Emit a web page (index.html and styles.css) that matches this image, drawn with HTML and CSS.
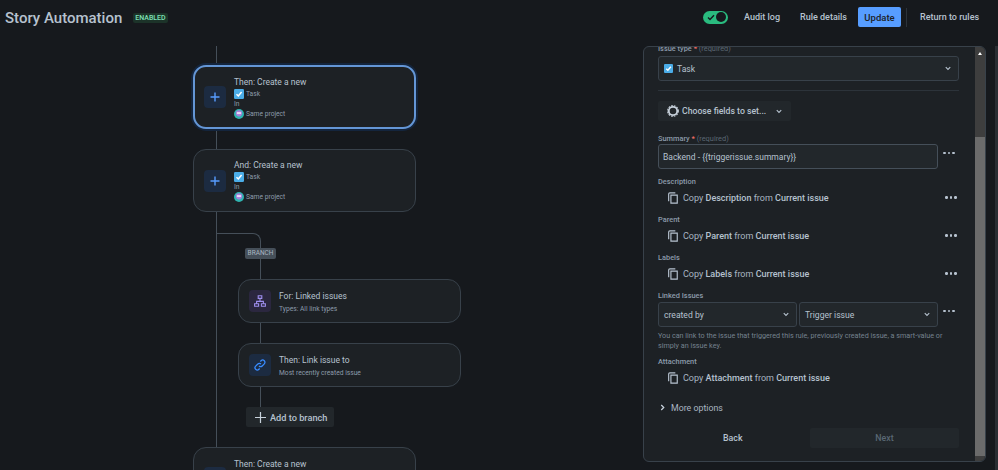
FILE: index.html
```html
<!DOCTYPE html>
<html lang="en">
<head>
<meta charset="utf-8">
<title>Story Automation</title>
<link rel="stylesheet" href="styles.css">
</head>
<body>
<svg class="defs" width="0" height="0">
  <defs>
    <symbol id="copy" viewBox="0 0 12 14"><path d="M3.500 3.500h7.600v9.700H3.500zM.8 11V2.200C.8 1.300 1.400.8 2.200.8h6.600" fill="none" stroke="currentColor" stroke-width="1.400"/></symbol>
    <symbol id="chev" viewBox="0 0 8 6"><path d="M1 1.300l3 3 3-3" fill="none" stroke="currentColor" stroke-width="1.500"/></symbol>
    <symbol id="task" viewBox="0 0 10 10"><rect width="10" height="10" rx="1.200" fill="#4bade8"/><path d="M2.500 5.200l1.800 1.800 3.300-4" fill="none" stroke="#fff" stroke-width="1.500"/></symbol>
    <symbol id="proj" viewBox="0 0 11 11"><circle cx="5.500" cy="5.500" r="5.500" fill="#2fb4b0"/><circle cx="5.500" cy="4.800" r="3.400" fill="#a77fdc"/><path d="M3.200 3.400h4.600v2.200H3.200z" fill="#e6dcf5"/></symbol>
  </defs>
</svg>
<header class="topbar">
  <div class="title-group">
    <h1 class="title">Story Automation</h1>
    <span class="lozenge">ENABLED</span>
  </div>
  <nav class="actions">
    <span class="toggle"><svg class="toggle-check" viewBox="0 0 8 7" width="8" height="7"><path d="M1 3.500l2 2 4-4.300" fill="none" stroke="#16191d" stroke-width="1.400"/></svg><span class="toggle-knob"></span></span>
    <span class="action action-audit">Audit log</span>
    <span class="action action-details">Rule details</span>
    <span class="update">Update</span>
    <span class="divider"></span>
    <span class="action action-return">Return to rules</span>
  </nav>
</header>
<main class="workspace">
  <section class="canvas">
    <div class="line line-main"></div>
    <div class="branch-curve"></div>
    <div class="line line-branch"></div>
    <span class="branch-tag">BRANCH</span>

    <article class="card card-a selected">
      <span class="tile tile-blue"><svg viewBox="0 0 10 10" width="10" height="10"><path d="M5 .5v9M.5 5h9" stroke="#579dff" stroke-width="1.400"/></svg></span>
      <div class="card-body">
        <p class="card-title">Then: Create a new</p>
        <p class="meta"><svg class="meta-ic" width="10" height="10"><use href="#task"/></svg>Task</p>
        <p class="meta-in">In</p>
        <p class="meta"><svg class="meta-ic" width="10" height="10"><use href="#proj"/></svg>Same project</p>
      </div>
    </article>

    <article class="card card-b">
      <span class="tile tile-blue"><svg viewBox="0 0 10 10" width="10" height="10"><path d="M5 .5v9M.5 5h9" stroke="#579dff" stroke-width="1.400"/></svg></span>
      <div class="card-body">
        <p class="card-title">And: Create a new</p>
        <p class="meta"><svg class="meta-ic" width="10" height="10"><use href="#task"/></svg>Task</p>
        <p class="meta-in">In</p>
        <p class="meta"><svg class="meta-ic" width="10" height="10"><use href="#proj"/></svg>Same project</p>
      </div>
    </article>

    <article class="card card-c">
      <span class="tile tile-purple"><svg viewBox="0 0 12 12" width="12" height="12"><path d="M4.200.8h3.600v2.600H4.200zM.6 8.800h4v2.400h-4zM7.400 8.800h4v2.400h-4zM6 3.400v3M2.600 8.800V6.400h6.800v2.400" fill="none" stroke="#9f8fef" stroke-width="1.100"/></svg></span>
      <div class="card-body short">
        <p class="card-title">For: Linked issues</p>
        <p class="meta-sub">Types: All link types</p>
      </div>
    </article>

    <article class="card card-d">
      <span class="tile tile-blue"><svg viewBox="0 0 12 12" width="12" height="12"><path d="M5 7a2.200 2.200 0 0 0 3.200 0l2.100-2.100a2.250 2.250 0 0 0-3.200-3.200l-.8.8M7 5a2.200 2.200 0 0 0-3.200 0L1.700 7.100a2.250 2.250 0 0 0 3.200 3.200l.8-.8" fill="none" stroke="#388bff" stroke-width="1.300"/></svg></span>
      <div class="card-body short">
        <p class="card-title">Then: Link issue to</p>
        <p class="meta-sub">Most recently created issue</p>
      </div>
    </article>

    <span class="add-branch"><svg viewBox="0 0 11 11" width="11" height="11"><path d="M5.500 0v11M0 5.500h11" stroke="#c7d1db" stroke-width="1.200"/></svg>Add to branch</span>

    <article class="card card-e">
      <span class="tile tile-blue"><svg viewBox="0 0 10 10" width="10" height="10"><path d="M5 .5v9M.5 5h9" stroke="#579dff" stroke-width="1.400"/></svg></span>
      <div class="card-body">
        <p class="card-title">Then: Create a new</p>
      </div>
    </article>
  </section>

  <aside class="panel">
    <div class="panel-scroll">
      <label class="field-label clipped">Issue type <b>*</b> <i>(required)</i></label>
      <div class="select select-type"><svg class="select-ic" width="9" height="9"><use href="#task"/></svg><span>Task</span><svg class="chev" width="8" height="6"><use href="#chev"/></svg></div>
      <hr class="rule">
      <div class="choose"><svg viewBox="0 0 12 12" width="12" height="12"><circle cx="6" cy="6" r="4.200" fill="none" stroke="#c7d1db" stroke-width="1.800"/><circle cx="6" cy="6" r="5.300" fill="none" stroke="#c7d1db" stroke-width="1.200" stroke-dasharray="1.700 1.100"/></svg><span>Choose fields to set...</span><svg class="chev" width="8" height="6"><use href="#chev"/></svg></div>

      <label class="field-label">Summary <b>*</b> <i>(required)</i></label>
      <div class="row">
        <div class="input">Backend - {{triggerissue.summary}}</div>
        <span class="dots raised"><i></i><i></i><i></i></span>
      </div>

      <label class="field-label spaced">Description</label>
      <div class="row copy-row">
        <svg class="copy-ic" width="10" height="12"><use href="#copy"/></svg>
        <span class="copy-text">Copy <strong>Description</strong> from <strong>Current issue</strong></span>
        <span class="dots"><i></i><i></i><i></i></span>
      </div>
      <label class="field-label spaced">Parent</label>
      <div class="row copy-row">
        <svg class="copy-ic" width="10" height="12"><use href="#copy"/></svg>
        <span class="copy-text">Copy <strong>Parent</strong> from <strong>Current issue</strong></span>
        <span class="dots"><i></i><i></i><i></i></span>
      </div>
      <label class="field-label spaced">Labels</label>
      <div class="row copy-row">
        <svg class="copy-ic" width="10" height="12"><use href="#copy"/></svg>
        <span class="copy-text">Copy <strong>Labels</strong> from <strong>Current issue</strong></span>
        <span class="dots"><i></i><i></i><i></i></span>
      </div>

      <label class="field-label spaced">Linked Issues</label>
      <div class="row linked">
        <div class="select half"><span>created by</span><svg class="chev" width="8" height="6"><use href="#chev"/></svg></div>
        <div class="select half"><span>Trigger issue</span><svg class="chev" width="8" height="6"><use href="#chev"/></svg></div>
        <span class="dots raised"><i></i><i></i><i></i></span>
      </div>
      <p class="help">You can link to the issue that triggered this rule, previously created issue, a smart-value or simply an issue key.</p>

      <label class="field-label attach">Attachment</label>
      <div class="row copy-row">
        <svg class="copy-ic" width="10" height="12"><use href="#copy"/></svg>
        <span class="copy-text">Copy <strong>Attachment</strong> from <strong>Current issue</strong></span>
      </div>

      <div class="more"><svg viewBox="0 0 6 8" width="5" height="7"><path d="M1.500 1l3 3-3 3" fill="none" stroke="#c7d1db" stroke-width="1.500"/></svg><span>More options</span></div>

      <div class="footer">
        <span class="back">Back</span>
        <span class="next">Next</span>
      </div>
    </div>
    <div class="scrollbar"><span class="arrow up"></span><span class="thumb"></span><span class="arrow down"></span></div>
  </aside>
  <div class="page-scroll"></div>
</main>
</body>
</html>
```
FILE: styles.css
```css
* { box-sizing: border-box; }
html, body { margin: 0; height: 470px; overflow: hidden; }
body {
  background: #16191d;
  color: #b6c2cf;
  font-family: Roboto, "Noto Sans", "Liberation Sans", sans-serif;
  font-size: 8.600px;
}
p, h1 { margin: 0; }
.defs { position: absolute; }

.topbar { height: 46px; display: flex; justify-content: space-between; align-items: flex-start; padding: 0 0 0 5px; }
.title-group { display: flex; align-items: center; height: 36px; gap: 11px; }
.title { font-size: 15px; font-weight: 500; color: #b6c2cf; }
.lozenge { background: #1c3329; color: #7ee2b8; font-size: 7px; font-weight: 500; padding: 1px 2px; border-radius: 2px; line-height: 8px; }
.actions { display: flex; align-items: center; height: 20px; margin-top: 7px; color: #b6c2cf; }
.toggle { width: 25px; height: 13px; border-radius: 7px; background: #2abb7f; position: relative; margin-right: 16px; display: block; }
.toggle-check { position: absolute; left: 4px; top: 3px; }
.toggle-knob { position: absolute; right: 2px; top: 1.500px; width: 10px; height: 10px; border-radius: 50%; background: #16191d; }
.action { font-size: 9px; font-weight: 500; white-space: nowrap; }
.action-audit { width: 56px; }
.action-details { width: 58px; }
.update { width: 43px; height: 20px; background: #579dff; color: #1d2125; font-weight: 500; font-size: 9.500px; border-radius: 2px; display: flex; align-items: center; justify-content: center; }
.divider { width: 1px; height: 19px; background: #2c333a; margin: 0 13px 0 5px; }
.action-return { width: 60px; margin-right: 18px; }

.workspace { display: flex; height: 424px; position: relative; }
.canvas { width: 643px; height: 424px; position: relative; overflow: hidden; flex: none; }
.line { position: absolute; background: #454f59; width: 1px; }
.line-main { left: 216px; top: 0; height: 401px; }
.line-branch { left: 260px; top: 200px; height: 161px; }
.branch-curve { position: absolute; left: 216px; top: 187px; width: 45px; height: 20px; border-top: 1px solid #454f59; border-right: 1px solid #454f59; border-top-right-radius: 8px; }
.branch-tag { position: absolute; left: 245px; top: 202px; height: 11px; width: 31px; background: #454f59; color: #a9b5c1; font-size: 6.500px; line-height: 11px; text-align: center; border-radius: 2px; }

.card { position: absolute; width: 223px; background: #1d2125; border: 1px solid #38414a; border-radius: 13px; display: flex; align-items: center; padding-left: 10px; gap: 8px; }
.card-a { left: 193px; top: 19px; height: 64px; }
.card-b { left: 193px; top: 103px; height: 63px; }
.card-c { left: 238px; top: 233px; height: 44px; }
.card-d { left: 238px; top: 297px; height: 44px; }
.card-e { left: 193px; top: 401px; height: 64px; align-items: flex-start; padding-top: 10px; }
.card-e .tile { margin-top: 9px; }
.selected { border: 2px solid #6496d6; box-shadow: 0 0 0 2px #14253d; padding-left: 9px; }
.tile { width: 22px; height: 22px; border-radius: 4px; display: flex; align-items: center; justify-content: center; flex: none; }
.tile-blue { background: #1c2b41; }
.tile-purple { background: #2b273f; }
.short { padding-top: 2px; }
.card-title { font-size: 8.500px; line-height: 12px; margin-bottom: 1px; color: #b6c2cf; }
.meta { display: flex; align-items: center; gap: 2px; font-size: 6.700px; line-height: 10px; color: #8c9bab; }
.meta-ic { flex: none; }
.meta-in { font-size: 6.700px; line-height: 10px; color: #8c9bab; }
.meta-sub { font-size: 6.700px; line-height: 12px; color: #8c9bab; }

.add-branch { position: absolute; left: 246px; top: 361px; width: 88px; height: 20px; background: #22272b; border-radius: 2px; color: #b6c2cf; font-size: 9.200px; font-weight: 500; display: flex; align-items: center; gap: 4px; padding-left: 9px; }

.panel { width: 343px; height: 416px; flex: none; background: #1d2125; border: 1px solid #38414a; border-radius: 6px; display: flex; overflow: hidden; position: relative; }
.panel-scroll { flex: 1; padding: 0 14px; min-width: 0; }
.scrollbar { width: 10px; background: #3e3e3e; flex: none; position: relative; display: flex; flex-direction: column; justify-content: space-between; }
.thumb { position: absolute; left: 0; right: 0; top: 90px; height: 319px; background: #6b6b6b; }
.arrow { display: block; width: 0; height: 0; border-left: 2.500px solid transparent; border-right: 2.500px solid transparent; margin: 5px auto; }
.arrow.up { border-bottom: 3px solid #fff; }
.arrow.down { border-top: 3px solid #6b6b6b; position: relative; }
.page-scroll { width: 3px; margin-left: 9px; height: 424px; background: #2a2e33; }

.field-label { display: block; font-size: 7.400px; font-weight: 500; color: #8c9bab; line-height: 11px; }
.field-label b { color: #f87168; font-weight: 500; }
.field-label i { font-style: normal; font-weight: 400; color: #5b6773; }
.clipped { height: 8px; line-height: 4px; overflow: hidden; }
.spaced { margin-top: 7px; }
.attach { margin-top: 5px; }

.select { height: 25px; background: #22272b; border: 1px solid #38414a; border-radius: 3px; display: flex; align-items: center; padding-left: 5px; font-size: 8.600px; color: #b6c2cf; }
.select-type { width: 301px; margin-top: 1px; gap: 4px; }
.select-type span { flex: 1; }
.select .chev { margin-right: 7px; flex: none; color: #b6c2cf; }
.chev { width: 6px; height: 5px; }
.half { width: 139px; flex: none; justify-content: space-between; }
.rule { border: 0; border-top: 1px solid #2c333a; margin: 9px 0 10px; width: 301px; }
.choose { width: 133px; height: 20px; background: #22272b; border-radius: 2px; display: flex; align-items: center; font-size: 8.700px; font-weight: 500; padding-left: 9px; gap: 3px; color: #b6c2cf; white-space: nowrap; }
.choose .chev { margin-left: 7px; }
.choose + .field-label { margin-top: 12px; }

.row { display: flex; align-items: center; width: 316px; }
.input { width: 280px; height: 25px; background: #22272b; border: 1px solid #454f59; border-radius: 3px; padding-left: 4px; display: flex; align-items: center; font-size: 8.500px; color: #b6c2cf; flex: none; }
.dots { margin-left: auto; margin-right: 15px; width: 16px; display: flex; gap: 2px; justify-content: center; flex: none; }
.dots.raised { margin-bottom: 7px; }
.input + .dots, .half + .dots { margin-left: 3px; margin-right: 0; }
.dots i { width: 2.500px; height: 2.500px; border-radius: 50%; background: #b6c2cf; }
.copy-row { height: 20px; padding: 1px 0 0 10px; }
.copy-ic { color: #b6c2cf; margin-right: 5px; flex: none; }
.copy-text { font-size: 9px; color: #a9b5c1; white-space: nowrap; }
.copy-text strong { font-weight: 500; color: #b6c2cf; }
.linked { gap: 2px; margin-top: 1px; }
.linked .dots { margin-left: 1px; }
.help { font-size: 7.200px; line-height: 10px; color: #75828f; margin-top: 4px; width: 301px; }
.more { display: flex; align-items: center; gap: 6px; margin: 15px 0 0 2px; font-size: 8.800px; color: #a9b5c1; height: 11px; }
.footer { display: flex; align-items: center; justify-content: space-between; margin-top: 15px; width: 301px; }
.back { font-size: 8.800px; font-weight: 500; color: #b6c2cf; margin-left: 65px; }
.next { width: 149px; height: 20px; background: #22272b; border-radius: 2px; color: #596773; font-size: 8.800px; font-weight: 500; display: flex; align-items: center; justify-content: center; }
```
